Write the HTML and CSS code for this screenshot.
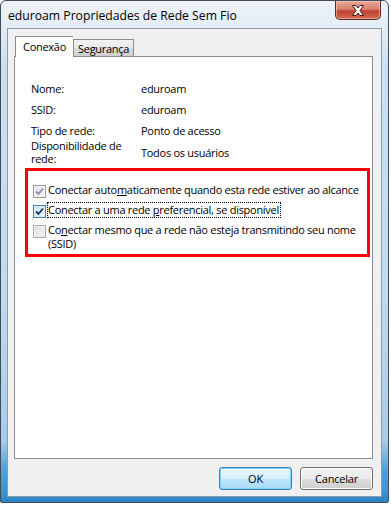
FILE: index.html
```html
<!DOCTYPE html>
<html lang="pt">

<head>
    <meta charset="UTF-8">
    <meta name="viewport" content="width=device-width, initial-scale=1.0">
    <title>eduroam Propriedades de Rede Sem Fio</title>

    <link rel="stylesheet" href="styles.css">
</head>

<body>
    <div class="window">
        <div class="titlebar">
            <span class="title">eduroam Propriedades de Rede Sem Fio</span>
            <button class="close">
                <svg width="14" height="11" viewBox="0 0 14 11">
                    <path d="M1.5 0.5 H5 L7 3 L9 0.5 H12.5 L9 5.5 L12.5 10.5 H9 L7 8 L5 10.5 H1.5 L5 5.5 Z"
                        fill="#fff" stroke="#4a1a14" stroke-width="1" stroke-linejoin="round" />
                </svg>
            </button>
        </div>

        <div class="client">
            <div class="tabs">
                <div class="tab active">Conexão</div>
                <div class="tab">Segurança</div>
            </div>

            <div class="panel">
                <div class="info">
                    <div class="row">
                        <span class="label">Nome:</span>
                        <span class="value">eduroam</span>
                    </div>
                    <div class="row">
                        <span class="label">SSID:</span>
                        <span class="value">eduroam</span>
                    </div>
                    <div class="row">
                        <span class="label">Tipo de rede:</span>
                        <span class="value">Ponto de acesso</span>
                    </div>
                    <div class="row tall">
                        <span class="label">Disponibilidade de rede:</span>
                        <span class="value">Todos os usuários</span>
                    </div>
                </div>

                <div class="options">
                    <div class="option">
                        <span class="check checked dim">
                            <svg width="9" height="9" viewBox="0 0 9 9">
                                <path d="M1 4.5 L3.5 7 L8 1.5" fill="none" stroke="#7e93b8" stroke-width="1.8" />
                            </svg>
                        </span>
                        <span class="text">Conectar auto<u>m</u>aticamente quando esta rede estiver ao alcance</span>
                    </div>
                    <div class="option">
                        <span class="check checked hot">
                            <svg width="9" height="9" viewBox="0 0 9 9">
                                <path d="M1 4.5 L3.5 7 L8 1.5" fill="none" stroke="#1b2f72" stroke-width="1.8" />
                            </svg>
                        </span>
                        <span class="text focus">Conectar a uma rede <u>p</u>referencial, se disponível</span>
                    </div>
                    <div class="option">
                        <span class="check"></span>
                        <span class="text">Co<u>n</u>ectar mesmo que a rede não esteja transmitindo seu nome (SSID)</span>
                    </div>
                </div>
            </div>

            <div class="buttons">
                <button class="btn default">OK</button>
                <button class="btn">Cancelar</button>
            </div>
        </div>
    </div>
</body>

</html>
```

FILE: styles.css
```css
body {
    margin: 0;
    background: #ffffff;
    font-family: "Open Sans", "Noto Sans", sans-serif;
    font-size: 11px;
    letter-spacing: -0.28px;
    color: #000000;
}

.window {
    width: 389px;
    height: 503px;
    box-sizing: border-box;
    border: 1px solid #3d4b5a;
    border-radius: 6px 6px 2px 2px;
    padding: 0 6px 5px 6px;
    display: flex;
    flex-direction: column;
    background: linear-gradient(to bottom,
            #eef3f9 0px,
            #e3ecf5 28px,
            #cde0f1 60px,
            #c1d9ef 300px,
            #a9cbe8 440px,
            #4da3d9 468px,
            #3a95d2 490px,
            #2b7fbf 503px);
}

/* title bar */

.titlebar {
    height: 28px;
    display: flex;
    align-items: flex-start;
}

.title {
    padding-left: 1px;
    margin-top: 6px;
    font-size: 12.2px;
    letter-spacing: 0;
    line-height: 17px;
    color: #000000;
}

.close {
    margin-left: auto;
    margin-right: 1px;
    width: 46px;
    height: 19px;
    border: 1px solid #5b2a22;
    border-top: none;
    border-radius: 0 0 5px 5px;
    background: linear-gradient(to bottom, #e8a696 0%, #d98270 45%, #c2432f 55%, #cf6a4f 100%);
    box-shadow: inset 0 0 0 1px rgba(255, 220, 210, 0.5);
    display: flex;
    align-items: center;
    justify-content: center;
    padding: 0;
}

/* client area */

.client {
    flex: 1;
    background: #f0f0f0;
    border: 1px solid #8d9cab;
    padding: 7px 8px 6px 6px;
    display: flex;
    flex-direction: column;
}

.tabs {
    height: 20px;
    display: flex;
    align-items: flex-end;
    position: relative;
    z-index: 1;
}

.tab {
    height: 17px;
    box-sizing: border-box;
    border: 1px solid #898c95;
    border-bottom: none;
    padding: 0 4px;
    line-height: 17px;
    background: linear-gradient(to bottom, #f2f2f2 0%, #ebebeb 50%, #dddddd 51%, #cfcfcf 100%);
}

.tab.active {
    height: 21px;
    margin-bottom: -1px;
    margin-left: 1px;
    padding: 0 7px;
    background: #ffffff;
    line-height: 19px;
    border-right: none;
}

.panel {
    height: 403px;
    box-sizing: border-box;
    background: #ffffff;
    border: 1px solid #898c95;
}

/* info rows */

.info {
    padding: 24px 0 0 16px;
}

.row {
    display: flex;
    line-height: 15px;
    margin-bottom: 6px;
}

.row.tall {
    margin-top: -5px;
    margin-bottom: 0;
    align-items: center;
}

.label {
    width: 110px;
}

.row.tall .label {
    width: 100px;
    margin-right: 10px;
    line-height: 13px;
}

/* options */

.options {
    margin: 3px 2px 0 10px;
    border: 3px solid #ff0000;
    padding: 11px 0 2px 5px;
}

.option {
    display: flex;
    align-items: flex-start;
    margin-bottom: 4px;
}

.option:last-child {
    margin-bottom: 0;
}

.check {
    flex: none;
    width: 13px;
    height: 13px;
    box-sizing: border-box;
    margin-top: 3px;
    margin-right: 1px;
    border: 1px solid #a6a6a6;
    background: linear-gradient(135deg, #dedede 0%, #f4f4f4 100%);
    box-shadow: inset 0 0 0 1px #f4f4f4;
    display: flex;
    align-items: center;
    justify-content: center;
}

.check.dim {
    border-color: #9a9a9a;
    background: linear-gradient(135deg, #e0e0e0 0%, #f6f6f6 100%);
}

.check.hot {
    border-color: #4a7fb0;
    background: linear-gradient(135deg, #c9e4f6 0%, #eef7fd 100%);
    box-shadow: inset 0 0 0 1px #dff0fb;
}

.text {
    line-height: 14px;
    border: 1px dotted transparent;
    padding-right: 1px;
}

.text.focus {
    border-color: #000000;
}

u {
    text-decoration: underline;
    text-underline-offset: 1px;
}

/* buttons */

.buttons {
    margin-top: 8px;
    display: flex;
    justify-content: flex-end;
    gap: 8px;
}

.btn {
    width: 73px;
    height: 23px;
    border: 1px solid #707070;
    border-radius: 3px;
    font-family: "Open Sans", "Noto Sans", sans-serif;
    font-size: 11px;
    letter-spacing: -0.2px;
    color: #000000;
    background: linear-gradient(to bottom, #f2f2f2 0%, #ebebeb 50%, #dddddd 51%, #cfcfcf 100%);
    box-shadow: inset 0 0 0 1px #fcfcfc;
    padding: 0;
}

.btn.default {
    border-color: #3c7fb1;
    background: linear-gradient(to bottom, #eaf6fd 0%, #d9f0fc 50%, #bee6fd 51%, #a7d9f5 100%);
    box-shadow: inset 0 0 0 1px #7fd2f8;
}
```
